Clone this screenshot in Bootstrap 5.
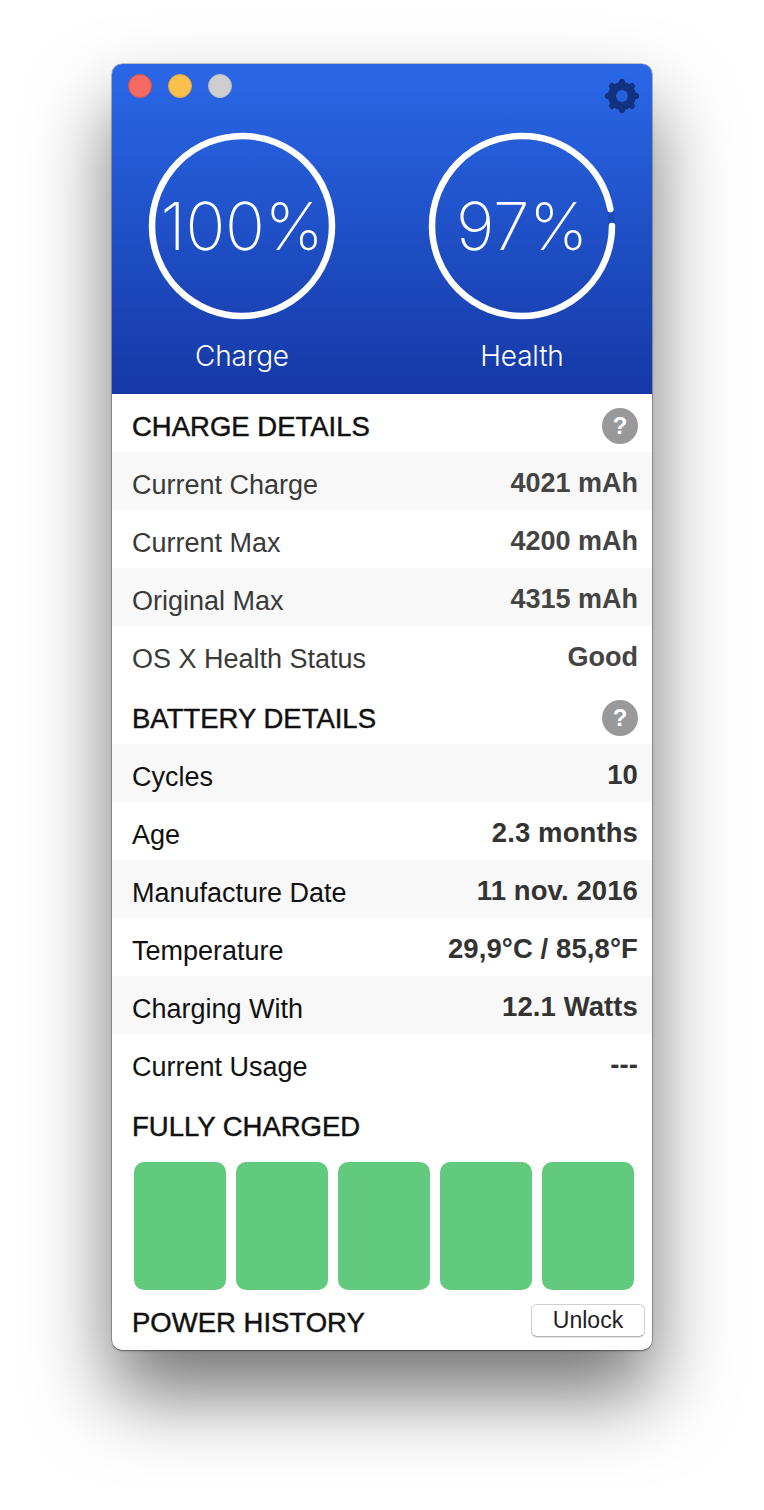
<!DOCTYPE html>
<html lang="en"><head><meta charset="utf-8"><title>Battery</title>
<link rel="stylesheet" href="https://cdn.jsdelivr.net/npm/bootstrap@5.3.0/dist/css/bootstrap.min.css">
<style>
html,body{background:#fff;height:1510px;overflow:hidden}
body{padding:64px 112px 0;font-family:"Liberation Sans",Arial,sans-serif}
.win{width:540px;height:1286px;border-radius:10px;overflow:hidden;background:#fff;box-shadow:0 0 0 .5px rgba(0,0,0,.4),0 1px 2px rgba(0,0,0,.35)}
.win-wrap{width:540px;height:1286px;border-radius:10px;box-shadow:0 44px 80px rgba(0,0,0,.55)}
.hero{height:330px;background:linear-gradient(#2a68e8,#1538a6);color:#fff}
.lights{padding:10px 11px 0 16px;height:67px}
.dot{width:24px;height:24px;border-radius:50%;display:block;border:1px solid}
.d-red{background:#f66a61;border-color:#de524b}
.d-yellow{background:#fbbf4c;border-color:#e3a63a}
.d-gray{background:#cecece;border-color:#bdbdbd}
.gear{width:38px;height:38px;margin-top:3px}
.gauges{padding:0 35px}
.gauge{width:190px}
.gauge-ring{position:relative;width:190px;height:190px}
.gauge-num{position:absolute;inset:0;display:flex;align-items:center;justify-content:center;font-family:Inter,"Liberation Sans",sans-serif;font-weight:200;font-size:66px;letter-spacing:-.2px}
.gauge-cap{font-size:28px;text-align:center;line-height:34px;margin-top:18px;font-family:Inter,sans-serif;font-weight:300;letter-spacing:-.2px}
.sect{height:58px;padding:7px 14px 0 20px;font-size:27.5px;color:#111;-webkit-text-stroke:.45px #111}
.sect-b{height:60px;padding-top:9px}
.sect-c{height:64px;padding-top:5px}
.help{width:36px;height:36px;border-radius:50%;background:#999;color:#fff;font-weight:700;font-size:24px;-webkit-text-stroke:0;display:flex;align-items:center;justify-content:center;margin-top:-1px}
.item{height:58px;padding:0 14px 0 20px;font-size:27px;color:#3a3a3a}
.item:nth-child(odd){background:#f8f8f8}
.item-l{padding-top:8px}
.item-v{font-weight:700;color:#444;font-size:27px;padding-top:4px}
.dark .item{color:#111}
.dark .item-v{color:#333;font-size:27.5px;letter-spacing:.1px}
.tiles{gap:10px;padding:6px 18px 0 22px;height:134px}
.tile{width:92px;height:128px;background:#62ca7c;border-radius:10px}
.foot{height:60px;padding:0 7px 0 20px;font-size:27.5px;color:#111}
.foot-t{-webkit-text-stroke:.45px #111;padding-top:6px}
.unlock{width:114px;height:33px;padding:0;background:#fff;border:1px solid #cfcfcf;border-bottom-color:#b5b5b5;border-radius:6px;font-size:23px;line-height:31px;color:#222;box-shadow:0 1px 1px rgba(0,0,0,.1);font-family:"Liberation Sans",sans-serif}
</style></head><body>
<div class="win-wrap"><div class="win">
 <div class="hero">
  <div class="lights d-flex justify-content-between align-items-start">
   <div class="d-flex gap-3"><span class="dot d-red"></span><span class="dot d-yellow"></span><span class="dot d-gray"></span></div>
   <svg class="gear" viewBox="0 0 38 38" fill="#12327f"><g><rect x="16" y="2" width="6" height="34" rx="2.5"/><rect x="16" y="2" width="6" height="34" rx="2.5" transform="rotate(45 19 19)"/><rect x="16" y="2" width="6" height="34" rx="2.5" transform="rotate(90 19 19)"/><rect x="16" y="2" width="6" height="34" rx="2.5" transform="rotate(135 19 19)"/></g><circle cx="19" cy="19" r="10" fill="none" stroke="#12327f" stroke-width="8"/><circle cx="19" cy="19" r="6" fill="#2560dc"/></svg>
  </div>
  <div class="gauges d-flex justify-content-between">
   <div class="gauge"><div class="gauge-ring"><svg width="190" height="190" viewBox="0 0 190 190"><circle cx="95" cy="95" r="90" fill="none" stroke="#fff" stroke-width="6.5"/></svg><div class="gauge-num">100%</div></div><div class="gauge-cap">Charge</div></div>
   <div class="gauge"><div class="gauge-ring"><svg width="190" height="190" viewBox="0 0 190 190"><circle cx="95" cy="95" r="90" fill="none" stroke="#1c4bb8" stroke-width="6.5"/><circle cx="95" cy="95" r="90" fill="none" stroke="#fff" stroke-width="6.5" stroke-linecap="round" pathLength="100" stroke-dasharray="97 3"/></svg><div class="gauge-num">97%</div></div><div class="gauge-cap">Health</div></div>
  </div>
 </div>
 <div class="sect d-flex justify-content-between align-items-center"><span>CHARGE DETAILS</span><span class="help">?</span></div>
 <div>
  <div class="item d-flex justify-content-between align-items-center"><span class="item-l">Current Charge</span><span class="item-v">4021 mAh</span></div>
  <div class="item d-flex justify-content-between align-items-center"><span class="item-l">Current Max</span><span class="item-v">4200 mAh</span></div>
  <div class="item d-flex justify-content-between align-items-center"><span class="item-l">Original Max</span><span class="item-v">4315 mAh</span></div>
  <div class="item d-flex justify-content-between align-items-center"><span class="item-l">OS X Health Status</span><span class="item-v">Good</span></div>
 </div>
 <div class="sect sect-b d-flex justify-content-between align-items-center"><span>BATTERY DETAILS</span><span class="help">?</span></div>
 <div class="dark">
  <div class="item d-flex justify-content-between align-items-center"><span class="item-l">Cycles</span><span class="item-v">10</span></div>
  <div class="item d-flex justify-content-between align-items-center"><span class="item-l">Age</span><span class="item-v">2.3 months</span></div>
  <div class="item d-flex justify-content-between align-items-center"><span class="item-l">Manufacture Date</span><span class="item-v">11 nov. 2016</span></div>
  <div class="item d-flex justify-content-between align-items-center"><span class="item-l">Temperature</span><span class="item-v">29,9°C / 85,8°F</span></div>
  <div class="item d-flex justify-content-between align-items-center"><span class="item-l">Charging With</span><span class="item-v">12.1 Watts</span></div>
  <div class="item d-flex justify-content-between align-items-center"><span class="item-l">Current Usage</span><span class="item-v">---</span></div>
 </div>
 <div class="sect sect-c d-flex align-items-center"><span>FULLY CHARGED</span></div>
 <div class="tiles d-flex"><div class="tile"></div><div class="tile"></div><div class="tile"></div><div class="tile"></div><div class="tile"></div></div>
 <div class="foot d-flex justify-content-between align-items-center"><span class="foot-t">POWER HISTORY</span><button type="button" class="btn unlock">Unlock</button></div>
</div></div>
</body></html>
